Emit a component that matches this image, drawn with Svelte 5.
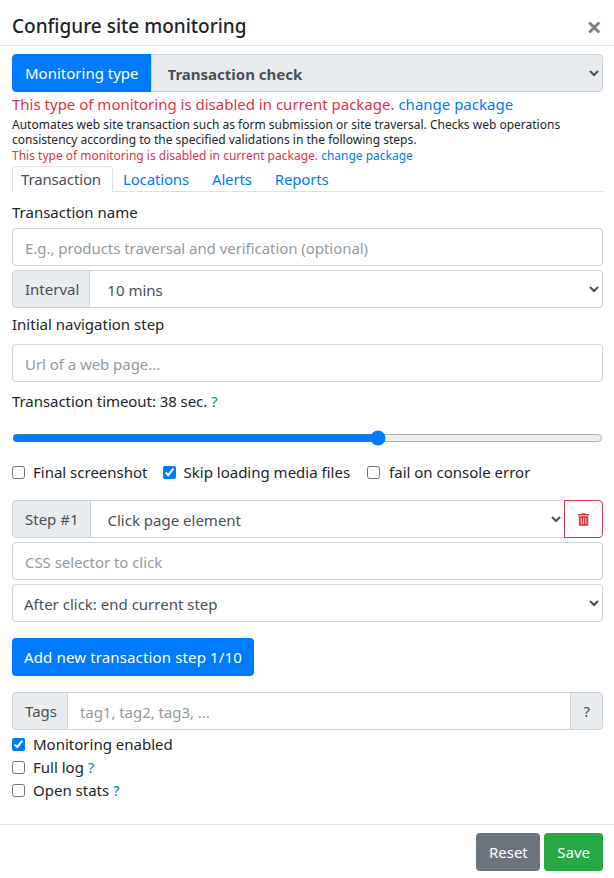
<script>
  let timeout = $state(38);
</script>

<div class="modal">
  <header class="head">
    <h5>Configure site monitoring</h5>
    <span class="close">×</span>
  </header>

  <main class="body">
    <div class="group">
      <span class="addon primary">Monitoring type</span>
      <select class="ctl grey">
        <option>Transaction check</option>
      </select>
    </div>
    <div class="warn"><span class="red">This type of monitoring is disabled in current package.</span> <a href="#a">change package</a></div>
    <div class="small">Automates web site transaction such as form submission or site traversal. Checks web operations consistency according to the specified validations in the following steps.<br /><span class="red">This type of monitoring is disabled in current package.</span> <a href="#a">change package</a></div>

    <nav class="tabs">
      <span class="tab active">Transaction</span>
      <a class="tab" href="#a">Locations</a>
      <a class="tab" href="#a">Alerts</a>
      <a class="tab" href="#a">Reports</a>
    </nav>

    <div class="label first">Transaction name</div>
    <input class="ctl solo" placeholder="E.g., products traversal and verification (optional)" />

    <div class="group gap4">
      <span class="addon a-interval">Interval</span>
      <select class="ctl"><option>10 mins</option></select>
    </div>

    <div class="label nav">Initial navigation step</div>
    <input class="ctl solo" placeholder="Url of a web page..." />

    <div class="label timeout">Transaction timeout: {timeout} sec. <a href="#a">?</a></div>
    <input class="range" type="range" min="10" max="55" bind:value={timeout} />

    <div class="checks">
      <label><input type="checkbox" />Final screenshot</label>
      <label><input type="checkbox" checked />Skip loading media files</label>
      <label class="third"><input type="checkbox" />fail on console error</label>
    </div>

    <div class="group">
      <span class="addon a-step">Step #1</span>
      <select class="ctl"><option>Click page element</option></select>
      <button class="trash" aria-label="Delete step">
        <svg viewBox="0 0 448 512" width="11" height="13"><path fill="currentColor" d="M32 464a48 48 0 0 0 48 48h288a48 48 0 0 0 48-48V128H32zm272-256a16 16 0 0 1 32 0v224a16 16 0 0 1-32 0zm-96 0a16 16 0 0 1 32 0v224a16 16 0 0 1-32 0zm-96 0a16 16 0 0 1 32 0v224a16 16 0 0 1-32 0zM432 32H312l-9.4-18.7A24 24 0 0 0 281.1 0H166.8a23.7 23.7 0 0 0-21.4 13.3L136 32H16A16 16 0 0 0 0 48v32a16 16 0 0 0 16 16h416a16 16 0 0 0 16-16V48a16 16 0 0 0-16-16z"/></svg>
      </button>
    </div>
    <input class="ctl solo gap4" placeholder="CSS selector to click" />
    <select class="ctl solo gap4"><option>After click: end current step</option></select>

    <button class="btn blue add">Add new transaction step 1/10</button>

    <div class="group tags">
      <span class="addon a-tags">Tags</span>
      <input class="ctl" placeholder="tag1, tag2, tag3, ..." />
      <span class="addon end">?</span>
    </div>

    <div class="stack">
      <label><input type="checkbox" checked />Monitoring enabled</label>
      <label><input type="checkbox" />Full log&nbsp;<a href="#a">?</a></label>
      <label><input type="checkbox" />Open stats&nbsp;<a href="#a">?</a></label>
    </div>
  </main>

  <footer class="foot">
    <button class="btn reset">Reset</button>
    <button class="btn green">Save</button>
  </footer>
</div>

<style>
  :global(body) {
    margin: 0;
    background: #fff;
  }
  .modal {
    width: 614px;
    height: 878px;
    box-sizing: border-box;
    font-family: "Noto Sans", sans-serif;
    font-size: 15px;
    line-height: 24px;
    color: #212529;
    display: flex;
    flex-direction: column;
    overflow: hidden;
  }
  a {
    color: #007bff;
    text-decoration: none;
  }
  .red {
    color: #dc3545;
  }
  .head {
    height: 46px;
    box-sizing: border-box;
    border-bottom: 1px solid #dee2e6;
    padding: 6px 12px 0;
    display: flex;
    justify-content: space-between;
    align-items: center;
  }
  h5 {
    margin: 0;
    font-size: 19px;
    font-weight: 500;
    line-height: 24px;
  }
  .close {
    font-size: 27px;
    font-weight: 700;
    color: #7f7f7f;
    margin-top: 2px;
  }
  .body {
    flex: 1;
    padding: 8px 11px 0 12px;
  }
  .group {
    display: flex;
    height: 38px;
  }
  .gap4 {
    margin-top: 4px;
  }
  .ctl {
    height: 38px;
    box-sizing: border-box;
    border: 1px solid #ced4da;
    border-radius: 4px;
    background-color: #fff;
    font: inherit;
    color: #495057;
    padding: 2px 12px 0;
    min-width: 0;
    outline: none;
  }
  select.ctl {
    padding-left: 7px;
  }
  .group select.ctl {
    padding-left: 13px;
  }
  .ctl::placeholder {
    color: #949a9f;
    opacity: 1;
    letter-spacing: -0.05px;
  }
  .solo {
    display: block;
    width: 100%;
  }
  .group .ctl {
    flex: 1;
    border-radius: 0 4px 4px 0;
    margin-left: -1px;
  }
  .group select.grey {
    background-color: #e9ecef;
    font-weight: 700;
    padding-left: 12px;
  }
  .addon {
    display: flex;
    align-items: center;
    box-sizing: border-box;
    padding: 0 12px;
    background: #e9ecef;
    border: 1px solid #ced4da;
    border-radius: 4px 0 0 4px;
    color: #495057;
    white-space: nowrap;
  }
  .a-interval,
  .a-tags {
    padding-right: 10px;
  }
  .a-step {
    padding-right: 11px;
  }
  .addon.primary {
    background: #007bff;
    border-color: #007bff;
    color: #fff;
  }
  .addon.end {
    border-radius: 0 4px 4px 0;
    margin-left: -1px;
  }
  .group:has(.end) .ctl,
  .group:has(.trash) .ctl {
    border-radius: 0;
  }
  .warn {
    line-height: 24px;
  }
  .small {
    font-size: 12px;
    line-height: 15.4px;
    margin-top: 1px;
    color: #212529;
  }
  .tabs {
    display: flex;
    margin-top: 3px;
    border-bottom: 1px solid #dee2e6;
    height: 25px;
    letter-spacing: -0.15px;
  }
  .tab {
    padding: 0 7px;
    margin-right: 7px;
    line-height: 25px;
    height: 26px;
    box-sizing: border-box;
    border: 1px solid transparent;
    border-radius: 4px 4px 0 0;
  }
  .tab.active {
    color: #495057;
    background: #fff;
    border-color: #dee2e6 #dee2e6 #fff;
    padding: 0 11px 0 8px;
    margin-right: 2px;
  }
  .label {
    line-height: 24px;
  }
  .label.first {
    margin-top: 8px;
    margin-bottom: 4px;
  }
  .label.nav {
    margin-top: 4px;
    margin-bottom: 8px;
  }
  .label.timeout {
    margin-top: 7px;
    letter-spacing: -0.06px;
  }
  .range {
    display: block;
    width: 100%;
    margin: 17px 0 0;
    height: 16px;
    accent-color: #007bff;
  }
  .checks {
    display: flex;
    gap: 15px;
    margin-top: 14px;
    margin-bottom: 16px;
  }
  .third {
    margin-left: 2px;
  }
  .third input {
    margin-right: 9px;
  }
  label {
    display: flex;
    align-items: center;
    white-space: nowrap;
  }
  label input {
    width: 13px;
    height: 13px;
    margin: 0 8px 0 0;
    accent-color: #007bff;
  }
  .trash {
    width: 39px;
    box-sizing: border-box;
    flex: none;
    background: #fff;
    border: 1px solid #dc3545;
    border-radius: 0 4px 4px 0;
    margin-left: -1px;
    color: #dc3545;
    padding: 0;
    display: flex;
    align-items: center;
    justify-content: center;
  }
  .btn {
    height: 38px;
    border: 0;
    border-radius: 4px;
    color: #fff;
    font: inherit;
    padding: 0 12px;
  }
  .blue {
    background: #007bff;
  }
  .reset {
    background: #6c757d;
    padding: 0 12.5px;
  }
  .green {
    background: #28a745;
    padding: 0 13px;
  }
  .add {
    display: block;
    margin-top: 16px;
    letter-spacing: 0.14px;
  }
  .tags {
    margin-top: 16px;
  }
  .stack {
    margin-top: 3px;
    display: flex;
    flex-direction: column;
    line-height: 23px;
  }
  .foot {
    height: 54px;
    box-sizing: border-box;
    border-top: 1px solid #dee2e6;
    padding: 8px 11px 0 0;
    display: flex;
    justify-content: flex-end;
    gap: 4px;
  }
</style>
